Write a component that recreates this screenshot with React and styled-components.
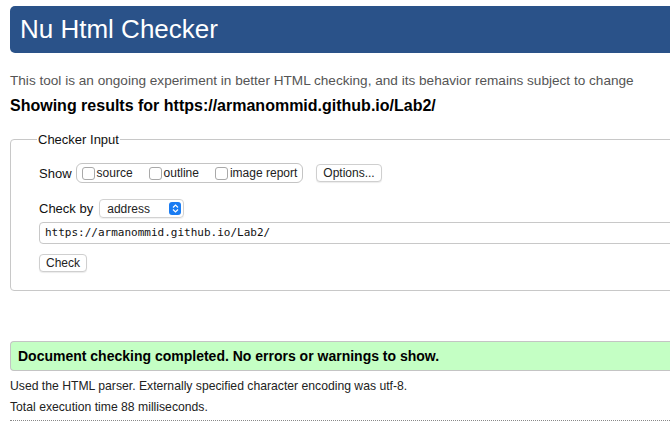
import React from 'react';
import styled, { createGlobalStyle } from 'styled-components';

const GlobalStyle = createGlobalStyle`
  html, body {
    margin: 0;
    padding: 0;
    overflow: hidden;
    background: #ffffff;
  }
  body {
    font-family: "Liberation Sans", Arial, sans-serif;
    color: #000;
  }
`;

const Page = styled.div`
  width: 700px;
  padding: 6px 0 0 10px;
`;

const Header = styled.h1`
  margin: 0;
  height: 47px;
  background: #2a5289;
  border-radius: 5px 0 0 5px;
  color: #ffffff;
  font-size: 26px;
  font-weight: normal;
  line-height: 47px;
  padding-left: 10px;
`;

const Tagline = styled.p`
  margin: 20px 0 0;
  font-size: 13.6px;
  color: #555;
  line-height: 16px;
`;

const Showing = styled.h2`
  margin: 7px 0 0;
  font-size: 16px;
  font-weight: bold;
  line-height: 20px;
`;

const Fieldset = styled.fieldset`
  margin: 16px 0 0;
  padding: 12px 28px 18px 28px;
  border: 1px solid #c8c8c8;
  border-radius: 4px;
  min-inline-size: 0;
`;

const Legend = styled.legend`
  font-size: 13px;
  padding: 0 1px;
  margin-left: -2px;
  color: #111;
`;

const Row = styled.div`
  display: flex;
  align-items: center;
  gap: ${(p) => p.gap || 4}px;
  margin-top: ${(p) => p.mt || 0}px;
  font-size: 13px;
`;

const Label = styled.span`
  font-size: 13px;
  color: #111;
`;

const ToggleGroup = styled.div`
  display: flex;
  align-items: center;
  gap: 16px;
  height: 18px;
  padding: 0 5px 0 5px;
  border: 1px solid #c4c4c4;
  border-radius: 6px;
`;

const Toggle = styled.label`
  display: flex;
  align-items: center;
  gap: 2px;
  font-size: 12px;
  color: #222;
`;

const Box = styled.span`
  width: 11px;
  height: 11px;
  border: 1px solid #a9a9a9;
  border-radius: 3px;
  background: #fff;
`;

const Button = styled.button`
  font-family: "Liberation Sans", Arial, sans-serif;
  font-size: 12px;
  color: #222;
  background: #fff;
  border: 1px solid #cfcfcf;
  border-radius: 4px;
  box-shadow: 0 1px 1px rgba(0, 0, 0, 0.08);
  height: 18px;
  padding: 0 6px;
  margin-left: ${(p) => p.ml || 0}px;
`;

const Select = styled.div`
  display: flex;
  align-items: center;
  justify-content: space-between;
  width: 74px;
  height: 17px;
  margin-left: 2px;
  border: 1px solid #d2d2d2;
  border-radius: 4px;
  padding: 0 2px 0 7px;
  font-size: 12px;
  color: #222;
  box-shadow: 0 1px 1px rgba(0, 0, 0, 0.06);
`;

const Arrow = styled.span`
  width: 12px;
  height: 13px;
  border-radius: 3px;
  background: #1a7cf2;
  display: flex;
  align-items: center;
  justify-content: center;
`;

const UrlInput = styled.div`
  margin-top: 4px;
  margin-right: -40px;
  height: 20px;
  border: 1px solid #c8c8c8;
  border-radius: 4px;
  padding-left: 5px;
  font-family: "DejaVu Sans Mono", "Liberation Mono", monospace;
  font-size: 11px;
  line-height: 20px;
  color: #111;
`;

const Result = styled.div`
  margin-top: 50px;
  height: 28px;
  background: #c4ffc4;
  border: 1px solid #c4c4c4;
  border-right: none;
  border-radius: 4px 0 0 4px;
  padding-left: 7px;
  font-size: 14px;
  font-weight: bold;
  line-height: 28px;
`;

const Note = styled.p`
  margin: ${(p) => p.mt || 0}px 0 0;
  font-size: 12.2px;
  line-height: 14px;
  color: #222;
`;

const Dotted = styled.hr`
  margin: 6px 0 0;
  border: none;
  border-top: 1px dotted #888;
`;

const SelectArrow = () => (
  <svg width="7" height="9" viewBox="0 0 7 9">
    <path d="M1 3.5 L3.5 1 L6 3.5 M1 5.5 L3.5 8 L6 5.5" fill="none" stroke="#fff" strokeWidth="1.2" />
  </svg>
);

export default function App() {
  return (
    <Page>
      <GlobalStyle />
      <Header>Nu Html Checker</Header>
      <Tagline>
        This tool is an ongoing experiment in better HTML checking, and its behavior remains subject to change
      </Tagline>
      <Showing>Showing results for https://armanommid.github.io/Lab2/</Showing>
      <Fieldset>
        <Legend>Checker Input</Legend>
        <Row mt={4}>
          <Label>Show</Label>
          <ToggleGroup>
            <Toggle><Box />source</Toggle>
            <Toggle><Box />outline</Toggle>
            <Toggle><Box />image report</Toggle>
          </ToggleGroup>
          <Button ml={9}>Options...</Button>
        </Row>
        <Row mt={16}>
          <Label>Check by</Label>
          <Select>
            address
            <Arrow><SelectArrow /></Arrow>
          </Select>
        </Row>
        <UrlInput>https://armanommid.github.io/Lab2/</UrlInput>
        <Row mt={10}>
          <Button>Check</Button>
        </Row>
      </Fieldset>
      <Result>Document checking completed. No errors or warnings to show.</Result>
      <Note mt={8}>Used the HTML parser. Externally specified character encoding was utf-8.</Note>
      <Note mt={7}>Total execution time 88 milliseconds.</Note>
      <Dotted />
    </Page>
  );
}
